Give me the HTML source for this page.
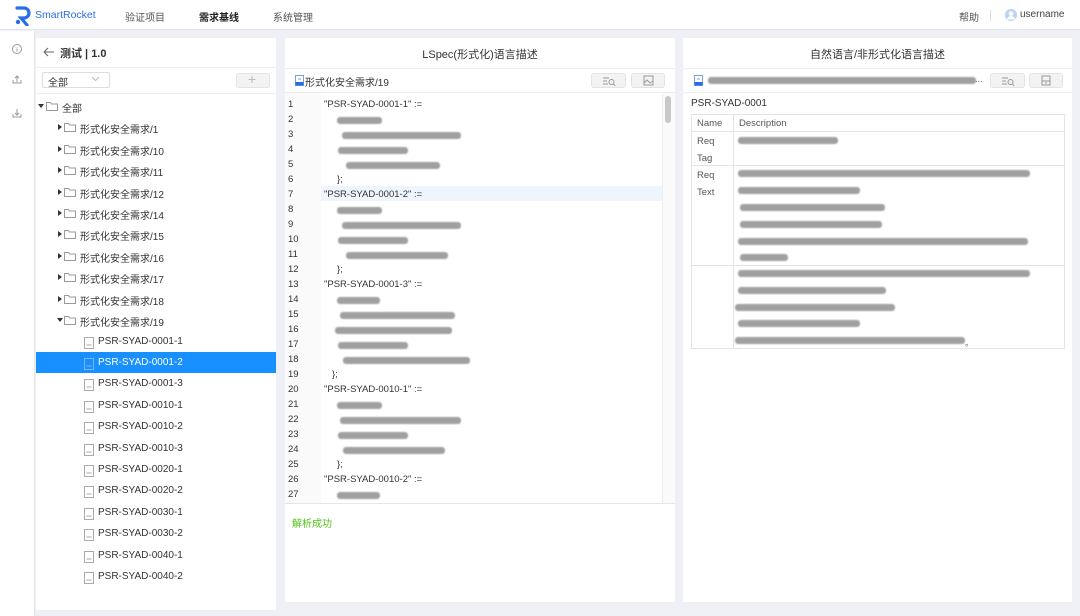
<!DOCTYPE html>
<html><head><meta charset="utf-8">
<style>
*{box-sizing:border-box;margin:0;padding:0}
body{width:1080px;height:616px;overflow:hidden;background:#eef0f5;font-family:"Liberation Sans","Noto Sans CJK SC",sans-serif;font-size:10px;color:#333;position:relative}
.a{position:absolute}
.top{left:0;top:0;width:1080px;height:30px;background:#fff;border-bottom:1px solid #e4e6ee}
.side{left:0;top:31px;width:35px;height:585px;background:#fff;border-right:1px solid #e6e6e6}
.panel{background:#fff}
.b{position:absolute;height:7px;background:#a0a0a0;border-radius:3px;filter:blur(0.9px)}
.ln{position:absolute;left:288px;font-size:9.5px;color:#333}
.cd{position:absolute;left:324px;font-size:9.5px;color:#333}
.tr{position:absolute;font-size:10px;color:#333;white-space:nowrap}
.btn{position:absolute;height:15px;border:1px solid #e3e3e3;background:#f2f3f5;border-radius:3px}
.ic{stroke:#999;fill:none;stroke-width:1}
</style></head><body>
<div class="a top"></div>
<svg class="a" style="left:14px;top:6px" width="18" height="20" viewBox="0 0 18 20"><path d="M3 2h7a5 5 0 0 1 0 10H7l6 7" stroke="#2a6de8" stroke-width="3.2" fill="none" stroke-linecap="round"/><circle cx="4" cy="16" r="2.2" fill="#2a6de8"/></svg>
<div class="a" style="left:35px;top:9px;font-size:10.5px;color:#2a6de8">SmartRocket</div>
<div class="a" style="left:125px;top:9px;font-size:10px;color:#555">验证项目</div>
<div class="a" style="left:199px;top:9px;font-size:10px;color:#222;font-weight:bold">需求基线</div>
<div class="a" style="left:273px;top:9px;font-size:10px;color:#555">系统管理</div>
<div class="a" style="left:959px;top:9px;font-size:10px;color:#555">帮助</div>
<div class="a" style="left:990px;top:10px;width:1px;height:11px;background:#ddd"></div>
<svg class="a" style="left:1005px;top:9px" width="12" height="12" viewBox="0 0 12 12"><circle cx="6" cy="6" r="6" fill="#b9d3f5"/><circle cx="6" cy="4.6" r="2.3" fill="#fff"/><path d="M2 10.5a4 3.5 0 0 1 8 0" fill="#fff"/></svg>
<div class="a" style="left:1020px;top:9px;font-size:10px;color:#444">username</div>

<div class="a side"></div>
<svg class="a" style="left:11px;top:43px" width="12" height="84" viewBox="0 0 12 84"><circle cx="6" cy="6" r="4.5" class="ic"/><path d="M6 4v0.5M6 5.5v3" class="ic"/><path d="M2 37v3h8v-3M6 39v-6M4 35l2-2 2 2" class="ic"/><path d="M2 71v3h8v-3M6 66v6M4 70l2 2 2-2" class="ic"/></svg>

<div class="a panel" style="left:36px;top:38px;width:240px;height:572px"></div>
<svg class="a" style="left:43px;top:47px" width="12" height="10"><path d="M11 5H1M5 1L1 5l4 4" stroke="#666" fill="none"/></svg>
<div class="a" style="left:60px;top:45px;font-size:11px;font-weight:bold;color:#333">测试 | 1.0</div>
<div class="a" style="left:36px;top:67px;width:240px;height:1px;background:#eee"></div>
<div class="a" style="left:42px;top:72px;width:68px;height:16px;border:1px solid #ddd;border-radius:2px"></div>
<div class="a" style="left:48px;top:74px;font-size:10px">全部</div>
<svg class="a" style="left:91px;top:76px" width="9" height="6"><path d="M1 1l3.5 3.5L8 1" stroke="#bbb" fill="none"/></svg>
<div class="btn" style="left:236px;top:73px;width:34px"></div>
<div class="a" style="left:248px;top:71px;font-size:14px;color:#bbb">+</div>
<div class="a" style="left:36px;top:93px;width:240px;height:1px;background:#eee"></div>

<div id="tree"></div>
<div class="a" style="left:36px;top:352px;width:240px;height:21px;background:#1890ff"></div>

<div class="a panel" style="left:285px;top:38px;width:390px;height:564px"></div>
<div class="a" style="left:285px;top:46px;width:390px;text-align:center;font-size:11px;color:#333">LSpec(形式化)语言描述</div>
<div class="a" style="left:285px;top:68px;width:390px;height:1px;background:#eee"></div>
<svg class="a" style="left:295px;top:75px" width="9" height="11"><rect x="0.5" y="0.5" width="8" height="10" fill="#fff" stroke="#7aa0d8"/><rect x="0.5" y="7" width="8" height="3.5" fill="#2a6de8"/><path d="M3 4h3" stroke="#7aa0d8"/></svg>
<div class="a" style="left:305px;top:74px;font-size:10px">形式化安全需求/19</div>
<div class="btn" style="left:591px;top:73px;width:35px"></div>
<div class="btn" style="left:631px;top:73px;width:34px"></div>
<svg class="a" style="left:602px;top:76px" width="14" height="10"><path d="M1 2h6M1 5h4M1 8h5" stroke="#999"/><circle cx="9.5" cy="6" r="2.5" class="ic"/><path d="M11.3 7.8l2 2" stroke="#999"/></svg>
<svg class="a" style="left:643px;top:75px" width="11" height="11"><rect x="1" y="1" width="9" height="9" class="ic"/><path d="M1 8l3-3 3 3 3-2" class="ic"/></svg>
<div class="a" style="left:285px;top:92px;width:390px;height:1px;background:#eee"></div>
<div class="a" style="left:285px;top:93px;width:36px;height:410px;background:#fafafa"></div>
<div class="a" style="left:321px;top:186px;width:341px;height:15px;background:#eef5fd"></div>
<div class="a" style="left:662px;top:93px;width:13px;height:410px;background:#fafafa;border-left:1px solid #eee"></div>
<div class="a" style="left:665px;top:96px;width:6px;height:27px;background:#c8c8c8;border-radius:3px"></div>
<div class="a" style="left:285px;top:503px;width:390px;height:1px;background:#e6e6e6"></div>
<div id="code"></div>
<div class="a" style="left:292px;top:515px;font-size:10px;color:#52c41a">解析成功</div>

<div class="a panel" style="left:683px;top:38px;width:389px;height:564px"></div>
<div class="a" style="left:683px;top:46px;width:389px;text-align:center;font-size:11px;color:#333">自然语言/非形式化语言描述</div>
<div class="a" style="left:683px;top:68px;width:389px;height:1px;background:#eee"></div>
<svg class="a" style="left:694px;top:75px" width="9" height="11"><rect x="0.5" y="0.5" width="8" height="10" fill="#fff" stroke="#7aa0d8"/><rect x="0.5" y="7" width="8" height="3.5" fill="#2a6de8"/><path d="M3 4h3" stroke="#7aa0d8"/></svg>
<div class="b" style="left:708px;top:77px;width:268px"></div>
<div class="a" style="left:975px;top:74px;font-size:9px;color:#666">...</div>
<div class="btn" style="left:990px;top:73px;width:35px"></div>
<div class="btn" style="left:1029px;top:73px;width:34px"></div>
<svg class="a" style="left:1001px;top:76px" width="14" height="10"><path d="M1 2h6M1 5h4M1 8h5" stroke="#999"/><circle cx="9.5" cy="6" r="2.5" class="ic"/><path d="M11.3 7.8l2 2" stroke="#999"/></svg>
<svg class="a" style="left:1041px;top:75px" width="10" height="11"><rect x="1" y="1" width="8" height="9" class="ic"/><path d="M1 6h8M4 8h2" class="ic"/></svg>
<div class="a" style="left:683px;top:92px;width:389px;height:1px;background:#eee"></div>
<div class="a" style="left:691px;top:98px;font-size:10px">PSR-SYAD-0001</div>
<div class="a" style="left:691px;top:114px;width:374px;height:235px;border:1px solid #e4e4e4"></div>
<div class="a" style="left:733px;top:114px;width:1px;height:235px;background:#e4e4e4"></div>
<div class="a" style="left:691px;top:131px;width:374px;height:1px;background:#e4e4e4"></div>
<div class="a" style="left:691px;top:165px;width:374px;height:1px;background:#e4e4e4"></div>
<div class="a" style="left:691px;top:265px;width:374px;height:1px;background:#e4e4e4"></div>
<div class="a" style="left:697px;top:118px;font-size:9.5px;color:#555">Name</div>
<div class="a" style="left:739px;top:118px;font-size:9.5px;color:#555">Description</div>
<div class="a" style="left:697px;top:133px;font-size:9.5px;color:#555;line-height:17px">Req<br>Tag</div>
<div class="a" style="left:697px;top:167px;font-size:9.5px;color:#555;line-height:17px">Req<br>Text</div>
<div class="b" style="left:738px;top:137px;width:100px"></div>
<div class="b" style="left:738px;top:170px;width:292px"></div>
<div class="b" style="left:738px;top:187px;width:122px"></div>
<div class="b" style="left:740px;top:204px;width:145px"></div>
<div class="b" style="left:740px;top:221px;width:142px"></div>
<div class="b" style="left:738px;top:238px;width:290px"></div>
<div class="b" style="left:740px;top:254px;width:48px"></div>
<div class="b" style="left:738px;top:270px;width:292px"></div>
<div class="b" style="left:738px;top:287px;width:148px"></div>
<div class="b" style="left:735px;top:304px;width:160px"></div>
<div class="b" style="left:738px;top:320px;width:122px"></div>
<div class="b" style="left:735px;top:337px;width:230px"></div>
<div class="a" style="left:965px;top:336px;font-size:9px;color:#666">。</div>

<script>
var t='';
function f(x,y){return '<svg class="a" style="left:'+x+'px;top:'+(y+1)+'px" width="12" height="10"><path d="M0.5 1.5h4l1 1.5h6v6.5h-11z" fill="#fff" stroke="#999"/></svg>';}
function d(x,y,w){return '<svg class="a" style="left:'+x+'px;top:'+(y-1)+'px;z-index:2" width="10" height="12"><rect x="0.5" y="0.5" width="9" height="11" fill="none" stroke="'+(w?'#7fb4ef':'#aaa')+'"/><path d="M2.5 8h5" stroke="'+(w?'#7fb4ef':'#aaa')+'"/></svg>';}
function tri(x,y,open){return '<svg class="a" style="left:'+x+'px;top:'+(y+3)+'px" width="6" height="6"><path d="'+(open?'M0 1h6L3 5z':'M1 0v6l4-3z')+'" fill="#333"/></svg>';}
var y=100;
t+=tri(38,y,1)+f(46,y)+'<div class="tr" style="left:62px;top:'+y+'px">全部</div>';
var g=['1','10','11','12','14','15','16','17','18','19'];
for(var i=0;i<g.length;i++){y=100+21.4*(i+1);t+=tri(57,y,i==9)+f(64,y)+'<div class="tr" style="left:80px;top:'+y+'px">形式化安全需求/'+g[i]+'</div>';}
var L=['0001-1','0001-2','0001-3','0010-1','0010-2','0010-3','0020-1','0020-2','0030-1','0030-2','0040-1','0040-2'];
var tz='';
for(var i=0;i<L.length;i++){y=335.5+21.4*i;var s=i==1;tz+=d(84,y+2,s)+'<div class="tr" style="left:98px;top:'+y+'px;z-index:2;color:'+(s?'#fff':'#333')+'">PSR-SYAD-'+L[i]+'</div>';}
document.getElementById('tree').innerHTML=t;
document.body.insertAdjacentHTML('beforeend',tz);
var c='';
var lines=[['t','"PSR-SYAD-0001-1" :='],[337,45],[342,119],[338,70],[346,94],['e',337],['t','"PSR-SYAD-0001-2" :='],[337,45],[342,119],[338,70],[346,102],['e',337],['t','"PSR-SYAD-0001-3" :='],[337,43],[340,115],[335,117],[338,70],[343,127],['e',332],['t','"PSR-SYAD-0010-1" :='],[337,45],[340,121],[338,70],[343,102],['e',337],['t','"PSR-SYAD-0010-2" :='],[337,43]];
for(var i=0;i<lines.length;i++){var yy=99+15*i;c+='<div class="ln" style="top:'+yy+'px">'+(i+1)+'</div>';var l=lines[i];
if(l[0]=='t')c+='<div class="cd" style="top:'+yy+'px">'+l[1]+'</div>';
else if(l[0]=='e')c+='<div class="cd" style="left:'+l[1]+'px;top:'+yy+'px">};</div>';
else c+='<div class="b" style="left:'+l[0]+'px;top:'+(yy+3)+'px;width:'+l[1]+'px"></div>';}
document.getElementById('code').innerHTML=c;
</script>
</body></html>
